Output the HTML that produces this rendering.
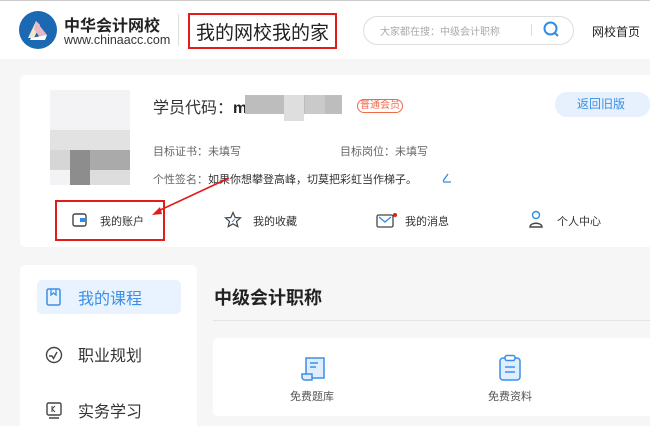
<!DOCTYPE html>
<html><head><meta charset="utf-8"><style>
*{margin:0;padding:0;box-sizing:border-box}
html,body{width:650px;height:426px;overflow:hidden}
body{background:#f6f6f6;font-family:"Liberation Sans","Noto Sans CJK SC",sans-serif;position:relative;color:#333}
.a{position:absolute;white-space:nowrap}
</style></head><body>
<div class="a" style="left:0;top:0;width:650px;height:59px;background:#fff;border-top:1px solid #ccc"></div>
<svg class="a" style="left:19px;top:11px" width="38" height="38" viewBox="0 0 38 38"><circle cx="19" cy="19" r="19" fill="#1b68b3"/><path d="M9 27 L17 10 L21 14 L15 27Z" fill="#f2e6c8"/><path d="M17 10 L28 24 L22 28 L15 18Z" fill="#e7b8c8"/><path d="M12 27 L28 24 L26 29 L11 29Z" fill="#fff"/></svg>
<div class="a" style="left:64px;top:12px;font-size:16px;font-weight:bold;color:#222">中华会计网校</div>
<div class="a" style="left:64px;top:33px;font-size:12.5px;color:#333">www.chinaacc.com</div>
<div class="a" style="left:178px;top:14px;width:1px;height:32px;background:#ddd"></div>
<div class="a" style="left:188px;top:13px;width:149px;height:36px;border:2px solid #e21b1b"></div>
<div class="a" style="left:196px;top:18px;font-size:19px;color:#222">我的网校我的家</div>
<div class="a" style="left:363px;top:16px;width:211px;height:29px;border:1px solid #ddd;border-radius:15px"></div>
<div class="a" style="left:380px;top:23px;font-size:10px;color:#aaa">大家都在搜：中级会计职称</div>
<div class="a" style="left:531px;top:24px;width:1px;height:12px;background:#ddd"></div>
<svg class="a" style="left:543px;top:21px" width="17" height="17" viewBox="0 0 17 17"><circle cx="7.5" cy="7.5" r="6" fill="none" stroke="#2e8de6" stroke-width="2"/><path d="M12 12l3 3" stroke="#2e8de6" stroke-width="2"/></svg>
<div class="a" style="left:592px;top:23px;font-size:12px;color:#222">网校首页</div>

<div class="a" style="left:20px;top:75px;width:640px;height:172px;background:#fff;border-radius:6px"></div>
<div class="a" style="left:50px;top:90px;width:80px;height:95px;background:#f3f3f5"></div>
<div class="a" style="left:50px;top:130px;width:80px;height:20px;background:#e2e2e2"></div>
<div class="a" style="left:50px;top:150px;width:80px;height:20px;background:#d6d6d6"></div>
<div class="a" style="left:70px;top:150px;width:20px;height:35px;background:#8d8d8d"></div>
<div class="a" style="left:90px;top:150px;width:40px;height:20px;background:#aaa"></div>
<div class="a" style="left:90px;top:170px;width:40px;height:15px;background:#ddd"></div>
<div class="a" style="left:153px;top:94px;font-size:16px;color:#333">学员代码：<b style="color:#222">m</b></div>
<div class="a" style="left:245px;top:95px;width:97px;height:19px;background:#bdbdbd"></div>
<div class="a" style="left:284px;top:95px;width:20px;height:26px;background:#dedede"></div>
<div class="a" style="left:305px;top:95px;width:20px;height:19px;background:#cacaca"></div>
<div class="a" style="left:357px;top:99px;width:46px;height:14px;border:1px solid #f06a4a;border-radius:7px;font-size:10px;color:#f06a4a;text-align:center;line-height:12px">普通会员</div>
<div class="a" style="left:555px;top:92px;width:95px;height:25px;background:#e6f1fd;border-radius:12px;font-size:12px;color:#3b8fe6;padding-left:22px;line-height:25px">返回旧版</div>
<div class="a" style="left:153px;top:143px;font-size:11px;color:#666">目标证书：未填写</div>
<div class="a" style="left:340px;top:143px;font-size:11px;color:#666">目标岗位：未填写</div>
<div class="a" style="left:153px;top:171px;font-size:11px;color:#666">个性签名：<span style="color:#333">如果你想攀登高峰，切莫把彩虹当作梯子。</span></div>
<svg class="a" style="left:441px;top:171px" width="12" height="12"><path d="M2 10 L7 3 M2 11h8" stroke="#2e8de6" stroke-width="1.3" fill="none"/></svg>

<div class="a" style="left:55px;top:200px;width:110px;height:41px;border:2px solid #e21b1b"></div>
<svg class="a" style="left:72px;top:213px" width="16" height="15"><rect x="1" y="1" width="13" height="12" rx="2" fill="none" stroke="#444" stroke-width="1.4"/><rect x="8" y="5" width="6" height="4" fill="#2e8de6"/></svg>
<div class="a" style="left:100px;top:213px;font-size:11px;color:#333">我的账户</div>
<svg class="a" style="left:224px;top:211px" width="18" height="18"><path d="M9 1.5l2.2 5 5.3.4-4 3.5 1.3 5.2L9 12.8 4.2 15.6l1.3-5.2-4-3.5 5.3-.4z" fill="none" stroke="#444" stroke-width="1.2"/><path d="M8 11l3-3" stroke="#2e8de6"/></svg>
<div class="a" style="left:253px;top:213px;font-size:11px;color:#333">我的收藏</div>
<svg class="a" style="left:376px;top:212px" width="22" height="16"><rect x="1" y="3" width="16" height="12" rx="1.5" fill="none" stroke="#444" stroke-width="1.3"/><path d="M3 5l6 5 6-5" stroke="#2e8de6" stroke-width="1.3" fill="none"/><circle cx="19" cy="3" r="2" fill="#e21b1b"/></svg>
<div class="a" style="left:405px;top:213px;font-size:11px;color:#333">我的消息</div>
<svg class="a" style="left:528px;top:209px" width="16" height="20"><circle cx="8" cy="6" r="3.5" fill="none" stroke="#2e8de6" stroke-width="1.4"/><path d="M2 18c0-5 12-5 12 0z" fill="none" stroke="#444" stroke-width="1.4"/></svg>
<div class="a" style="left:557px;top:213px;font-size:11px;color:#333">个人中心</div>
<svg class="a" style="left:0;top:0" width="650" height="426"><path d="M229 178 L156 212" stroke="#e21b1b" stroke-width="1.6"/><path d="M152 215 L160 207 L162 214Z" fill="#e21b1b"/></svg>

<div class="a" style="left:20px;top:265px;width:177px;height:170px;background:#fff;border-radius:6px"></div>
<div class="a" style="left:37px;top:280px;width:144px;height:34px;background:#e8f3ff;border-radius:5px"></div>
<svg class="a" style="left:46px;top:288px" width="16" height="18"><rect x="1" y="1" width="13" height="16" rx="1.5" fill="none" stroke="#3b8fe6" stroke-width="1.5"/><path d="M5 1v6l2.5-2 2.5 2V1" fill="none" stroke="#3b8fe6" stroke-width="1.3"/></svg>
<div class="a" style="left:78px;top:285px;font-size:16px;color:#3b8fe6">我的课程</div>
<svg class="a" style="left:45px;top:346px" width="18" height="18"><circle cx="9" cy="9" r="7.5" fill="none" stroke="#444" stroke-width="1.4"/><path d="M4 10h3l1.5 2.5L12 6" fill="none" stroke="#444" stroke-width="1.4"/></svg>
<div class="a" style="left:78px;top:342px;font-size:16px;color:#333">职业规划</div>
<svg class="a" style="left:46px;top:402px" width="17" height="18"><rect x="1" y="1" width="14" height="12" rx="1.5" fill="none" stroke="#444" stroke-width="1.4"/><path d="M3 16h10" stroke="#444" stroke-width="1.5"/><path d="M6 4v6M6 7l3-3M6 7l3 3" stroke="#444"/></svg>
<div class="a" style="left:78px;top:398px;font-size:16px;color:#333">实务学习</div>

<div class="a" style="left:214px;top:284px;font-size:18px;font-weight:bold;color:#222">中级会计职称</div>
<div class="a" style="left:213px;top:320px;width:437px;height:1px;background:#e4e4e4"></div>
<div class="a" style="left:213px;top:338px;width:440px;height:78px;background:#fff;border-radius:5px"></div>
<svg class="a" style="left:300px;top:356px" width="28" height="26"><path d="M6 2h18v20H6z" fill="#dfeefe" stroke="#3b8fe6" stroke-width="1.5"/><path d="M2 18h10v6H5a3 3 0 0 1-3-3z" fill="#dfeefe" stroke="#3b8fe6" stroke-width="1.5"/><path d="M10 7h8M10 11h6" stroke="#3b8fe6" stroke-width="1.5"/></svg>
<div class="a" style="left:290px;top:388px;font-size:11px;color:#555">免费题库</div>
<svg class="a" style="left:498px;top:354px" width="24" height="28"><rect x="2" y="4" width="20" height="22" rx="3" fill="#dfeefe" stroke="#3b8fe6" stroke-width="1.5"/><rect x="7" y="1.5" width="10" height="5" rx="2" fill="#fff" stroke="#3b8fe6" stroke-width="1.5"/><path d="M7 13h10M7 18h10" stroke="#3b8fe6" stroke-width="1.5"/></svg>
<div class="a" style="left:488px;top:388px;font-size:11px;color:#555">免费资料</div>
</body></html>
